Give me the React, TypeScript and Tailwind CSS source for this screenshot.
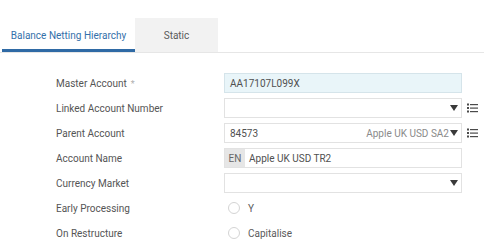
import { ReactNode } from "react";

const font = { fontFamily: "Roboto, 'Noto Sans', sans-serif" };

function Caret() {
  return (
    <svg width="8" height="6" viewBox="0 0 8 6" className="shrink-0">
      <path d="M0 0 H8 L4 6 Z" fill="#3a3a3a" />
    </svg>
  );
}

function ListIcon() {
  return (
    <svg width="11" height="10" viewBox="0 0 11 10">
      <g fill="#4a4a4a">
        <rect x="0" y="0.5" width="2" height="2" />
        <rect x="0" y="4" width="2" height="2" />
        <rect x="0" y="7.5" width="2" height="2" />
        <rect x="3" y="1" width="8" height="1.2" />
        <rect x="3" y="4.5" width="8" height="1.2" />
        <rect x="3" y="8" width="8" height="1.2" />
      </g>
    </svg>
  );
}

function Row({
  label,
  required,
  children,
  list,
}: {
  label: string;
  required?: boolean;
  children: ReactNode;
  list?: boolean;
}) {
  return (
    <div className="grid grid-cols-[168px_238px_22px] items-center h-5">
      <div className="text-[10px] text-[#555] flex items-center gap-1">
        {label}
        {required && <span className="text-[#b0b0b0] text-[9px] translate-y-[2px]">*</span>}
      </div>
      {children}
      <div className="flex justify-end pr-[6px]">{list && <ListIcon />}</div>
    </div>
  );
}

function Radio({ label }: { label: string }) {
  return (
    <div className="flex items-center h-5 pl-1 gap-2">
      <span className="w-3 h-3 rounded-full border border-[#d4d4d4] bg-white" />
      <span className="text-[10px] text-[#5a5a5a]">{label}</span>
    </div>
  );
}

export default function App() {
  return (
    <div className="w-[484px] h-[248px] bg-white overflow-hidden" style={font}>
      <div className="pt-[18px] border-b border-[#e6e6e6] flex">
        <div className="ml-[2px] w-[133px] h-[34px] flex items-center justify-center border-b-[3px] border-[#2f6aa5] text-[10px] text-[#3470aa] pt-[3px]">
          Balance Netting Hierarchy
        </div>
        <div className="w-[83px] h-[34px] flex items-center justify-center bg-[#f2f2f2] text-[10px] text-[#5a5a5a]">
          Static
        </div>
      </div>

      <div className="pl-[56px] pt-5 flex flex-col gap-[5px]">
        <Row label="Master Account" required>
          <div className="h-5 border border-[#d5e4ea] bg-[#e9f5f9] flex items-center px-[5px] text-[10px] text-[#505050]">
            AA17107L099X
          </div>
        </Row>
        <Row label="Linked Account Number" list>
          <div className="h-5 border border-[#e2e2e2] bg-white flex items-center justify-end px-[3px]">
            <Caret />
          </div>
        </Row>
        <Row label="Parent Account" list>
          <div className="h-5 border border-[#e2e2e2] bg-white flex items-center px-[5px] pr-[3px] text-[10px]">
            <span className="text-[#505050] flex-1">84573</span>
            <span className="text-[#8a8a8a] mr-px">Apple UK USD SA2</span>
            <Caret />
          </div>
        </Row>
        <Row label="Account Name">
          <div className="h-5 border border-[#e2e2e2] bg-white flex items-center text-[10px]">
            <span className="h-full w-5 bg-[#e6e6e6] text-[#666] flex items-center justify-center">EN</span>
            <span className="pl-1 text-[#505050]">Apple UK USD TR2</span>
          </div>
        </Row>
        <Row label="Currency Market">
          <div className="h-5 border border-[#e2e2e2] bg-white flex items-center justify-end px-[3px]">
            <Caret />
          </div>
        </Row>
        <Row label="Early Processing">
          <Radio label="Y" />
        </Row>
        <Row label="On Restructure">
          <Radio label="Capitalise" />
        </Row>
      </div>
    </div>
  );
}
